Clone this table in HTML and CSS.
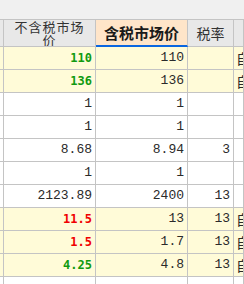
FILE: index.html
```html
<!DOCTYPE html>
<html>
<head>
<meta charset="utf-8">
<link rel="stylesheet" href="styles.css">
</head>
<body>
<div class="strip"></div>
<div class="grid">
  <div class="hd c0"></div>
  <div class="hd c1"><span>不含税市场<br>价</span></div>
  <div class="hd c2 sel">含税市场价</div>
  <div class="hd c3">税率</div>
  <div class="hd c4"></div>

  <div class="c y"></div><div class="c y n g">110</div><div class="c y">110</div><div class="c y"></div><div class="c y t">自营</div>
  <div class="c y"></div><div class="c y n g">136</div><div class="c y">136</div><div class="c y"></div><div class="c y t">自营</div>
  <div class="c"></div><div class="c">1</div><div class="c">1</div><div class="c"></div><div class="c t"></div>
  <div class="c"></div><div class="c">1</div><div class="c">1</div><div class="c"></div><div class="c t"></div>
  <div class="c"></div><div class="c">8.68</div><div class="c">8.94</div><div class="c">3</div><div class="c t"></div>
  <div class="c"></div><div class="c">1</div><div class="c">1</div><div class="c"></div><div class="c t"></div>
  <div class="c"></div><div class="c">2123.89</div><div class="c">2400</div><div class="c">13</div><div class="c t"></div>
  <div class="c y"></div><div class="c y n r">11.5</div><div class="c y">13</div><div class="c y">13</div><div class="c y t">自营</div>
  <div class="c y"></div><div class="c y n r">1.5</div><div class="c y">1.7</div><div class="c y">13</div><div class="c y t">自营</div>
  <div class="c y"></div><div class="c y n g">4.25</div><div class="c y">4.8</div><div class="c y">13</div><div class="c y t">自营</div>
  <div class="c last"></div><div class="c last"></div><div class="c last"></div><div class="c last"></div><div class="c last t"></div>
</div>
</body>
</html>
```
FILE: styles.css
```css
html, body {
  margin: 0;
  padding: 0;
  background: #f0f0f0;
  overflow: hidden;
  width: 244px;
  height: 284px;
}
.strip {
  height: 19px;
  background: #f0f0f0;
}
.grid {
  display: grid;
  grid-template-columns: 4px 92px 92px 46px 10px;
  grid-auto-rows: 23px;
  grid-template-rows: 27px;
  border-top: 1px solid #c4c4c4;
  width: 244px;
  background: #ffffff;
}
.hd {
  background: #e8e8e8;
  border-right: 1px solid #c4c4c4;
  border-bottom: 1px solid #c4c4c4;
  font-family: "Noto Sans CJK SC", sans-serif;
  font-size: 14px;
  line-height: 26px;
  color: #333333;
  text-align: center;
  overflow: hidden;
}
.hd.c1 span {
  display: block;
  font-size: 13px;
  letter-spacing: 1px;
  line-height: 13px;
}
.hd.sel {
  background: #ffe5c9;
  border-bottom: 2px solid #0a66e0;
  font-weight: bold;
  font-size: 15px;
  color: #1a1a1a;
  line-height: 25px;
}
.c {
  border-right: 1px solid #c4c4c4;
  border-bottom: 1px solid #c4c4c4;
  font-family: "Liberation Mono", monospace;
  font-size: 13px;
  line-height: 22px;
  color: #2a2a2a;
  text-align: right;
  padding-right: 3px;
  overflow: hidden;
  white-space: nowrap;
  background: #ffffff;
}
.c.last {
  height: 7px;
}
.c.y {
  background: #fffbd8;
}
.c.n {
  font-family: "DejaVu Sans Mono", monospace;
  font-weight: bold;
  font-size: 12px;
}
.c.g {
  color: #109a10;
}
.c.r {
  color: #f00000;
}
.c.t {
  text-align: left;
  padding-left: 2px;
  padding-right: 0;
  font-family: "Noto Sans CJK SC", sans-serif;
  font-size: 14px;
}
```
